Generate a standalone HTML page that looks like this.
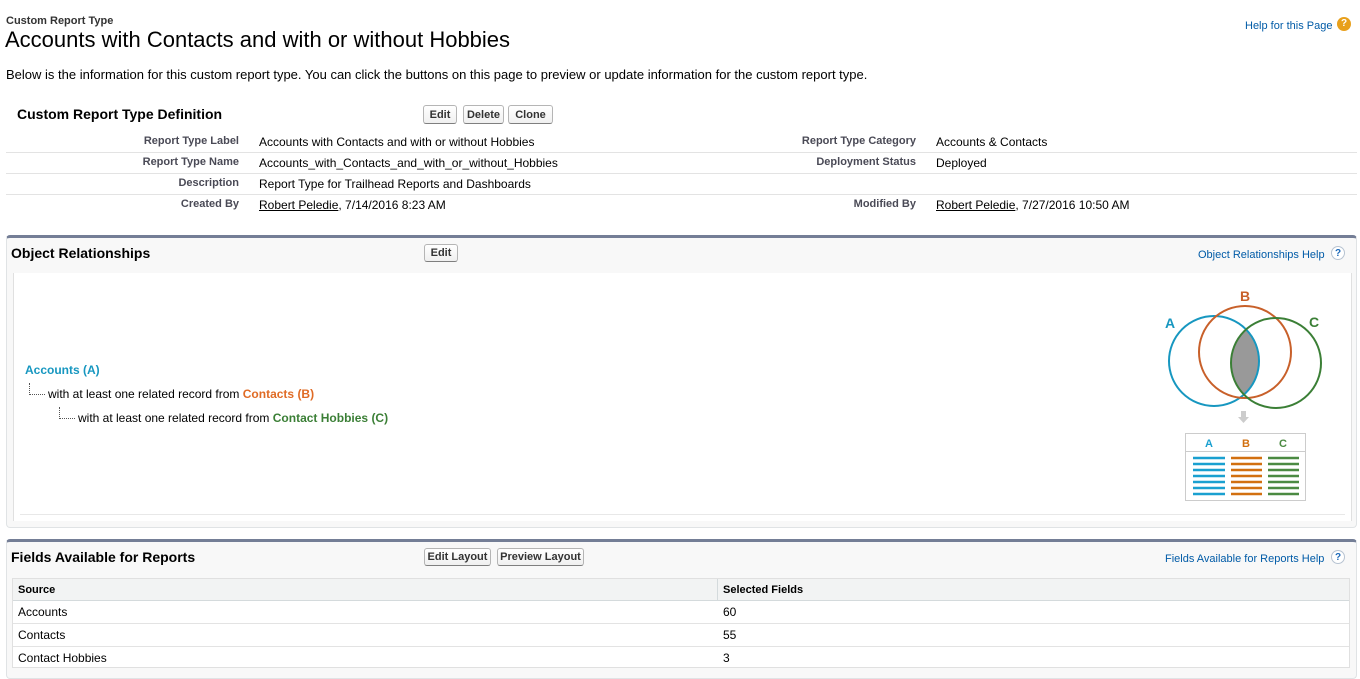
<!DOCTYPE html>
<html><head><style>
body{margin:0;width:1360px;height:664px;overflow:hidden;background:#fff;font-family:"Liberation Sans",Arial,sans-serif;color:#000;position:relative}
.a{position:absolute;white-space:nowrap}
.btn{position:absolute;height:19px;border:1px solid #b5b5b5;border-bottom-color:#7f7f7f;border-radius:3px;background:linear-gradient(#fff,#f0f0f0);font-size:11px;font-weight:bold;color:#333;line-height:19px;text-align:center;box-sizing:border-box}
.lbl{position:absolute;font-size:11px;font-weight:bold;color:#4a4a56;text-align:right;white-space:nowrap}
.val{position:absolute;font-size:12px;white-space:nowrap}
.hl{position:absolute;left:6px;width:1351px;height:1px;background:#e3e3e3}
.link{color:#015ba7;font-size:11px}
.q{position:absolute;width:14px;height:14px;border-radius:50%;background:#fff;border:1px solid #b7c3d1;font-size:10px;font-weight:bold;color:#1b68b8;text-align:center;line-height:14px;box-sizing:border-box}
u{text-decoration:underline}
</style></head><body>
<div class="a" style="left:6px;top:15px;font-size:11px;font-weight:bold;color:#333">Custom Report Type</div>
<div class="a" style="left:5px;top:27px;font-size:22px">Accounts with Contacts and with or without Hobbies</div>
<div class="a link" style="left:1245px;top:20px">Help for this Page</div>
<div class="a" style="left:1337px;top:17px;width:14px;height:14px;border-radius:50%;background:#e8a01c;color:#fff;font-size:10px;font-weight:bold;text-align:center;line-height:14px">?</div>
<div class="a" style="left:6px;top:67px;font-size:13px">Below is the information for this custom report type. You can click the buttons on this page to preview or update information for the custom report type.</div>

<div class="a" style="left:17px;top:106px;font-size:14px;font-weight:bold">Custom Report Type Definition</div>
<div class="btn" style="left:423px;top:105px;width:34px">Edit</div>
<div class="btn" style="left:463px;top:105px;width:41px">Delete</div>
<div class="btn" style="left:508px;top:105px;width:45px">Clone</div>

<div class="lbl" style="right:1121px;top:135px">Report Type Label</div>
<div class="val" style="left:259px;top:135px">Accounts with Contacts and with or without Hobbies</div>
<div class="lbl" style="right:444px;top:135px">Report Type Category</div>
<div class="val" style="left:936px;top:135px">Accounts &amp; Contacts</div>
<div class="hl" style="top:152px"></div>
<div class="lbl" style="right:1121px;top:156px">Report Type Name</div>
<div class="val" style="left:259px;top:156px">Accounts_with_Contacts_and_with_or_without_Hobbies</div>
<div class="lbl" style="right:444px;top:156px">Deployment Status</div>
<div class="val" style="left:936px;top:156px">Deployed</div>
<div class="hl" style="top:173px"></div>
<div class="lbl" style="right:1121px;top:177px">Description</div>
<div class="val" style="left:259px;top:177px">Report Type for Trailhead Reports and Dashboards</div>
<div class="hl" style="top:194px"></div>
<div class="lbl" style="right:1121px;top:198px">Created By</div>
<div class="val" style="left:259px;top:198px"><u>Robert Peledie</u>, 7/14/2016 8:23 AM</div>
<div class="lbl" style="right:444px;top:198px">Modified By</div>
<div class="val" style="left:936px;top:198px"><u>Robert Peledie</u>, 7/27/2016 10:50 AM</div>

<div class="a" style="left:6px;top:235px;width:1351px;height:293px;background:#f8f8f8;border:1px solid #e0e3e5;border-top:3px solid #747e96;border-radius:4px;box-sizing:border-box"></div>
<div class="a" style="left:11px;top:245px;font-size:14px;font-weight:bold">Object Relationships</div>
<div class="btn" style="left:424px;top:244px;width:34px;height:18px;line-height:17px">Edit</div>
<div class="a link" style="left:1198px;top:249px">Object Relationships Help</div>
<div class="q" style="left:1331px;top:246px">?</div>
<div class="a" style="left:13px;top:273px;width:1337px;height:248px;background:#fff;border-left:1px solid #e0e0e0;border-right:1px solid #e0e0e0"></div>
<div class="a" style="left:20px;top:514px;width:1325px;height:1px;background:#e8e8e8"></div>
<div class="a" style="left:25px;top:363px;font-size:12px;font-weight:bold;color:#1797c0">Accounts (A)</div>
<div class="a" style="left:29px;top:383px;width:15px;height:11px;border-left:1px dotted #555;border-bottom:1px dotted #555"></div>
<div class="a" style="left:48px;top:387px;font-size:12px">with at least one related record from <b style="color:#e06b25">Contacts (B)</b></div>
<div class="a" style="left:59px;top:407px;width:15px;height:11px;border-left:1px dotted #555;border-bottom:1px dotted #555"></div>
<div class="a" style="left:78px;top:411px;font-size:12px">with at least one related record from <b style="color:#3b7f36">Contact Hobbies (C)</b></div>

<svg class="a" style="left:1150px;top:280px" width="200" height="230" viewBox="1150 280 200 230">
<defs><clipPath id="ca"><circle cx="1214" cy="361" r="45"/></clipPath></defs>
<circle cx="1276" cy="363" r="45" fill="#999" clip-path="url(#ca)"/>
<circle cx="1214" cy="361" r="45" fill="none" stroke="#1797c0" stroke-width="2"/>
<circle cx="1245" cy="352" r="46" fill="none" stroke="#c8602a" stroke-width="2"/>
<circle cx="1276" cy="363" r="45" fill="none" stroke="#3b7f36" stroke-width="2"/>
<text x="1170" y="328" font-size="14" font-weight="bold" fill="#1797c0" text-anchor="middle" font-family="Liberation Sans">A</text>
<text x="1245" y="301" font-size="14" font-weight="bold" fill="#c8602a" text-anchor="middle" font-family="Liberation Sans">B</text>
<text x="1314" y="327" font-size="14" font-weight="bold" fill="#3b7f36" text-anchor="middle" font-family="Liberation Sans">C</text>
<path d="M1241 411h5v6h3l-5.5 6-5.5-6h3z" fill="#ccc"/>
<rect x="1185.5" y="433.5" width="120" height="67" fill="#fff" stroke="#ccc"/>
<line x1="1185" y1="451.5" x2="1306" y2="451.5" stroke="#ccc"/>
<text x="1209" y="447" font-size="11" font-weight="bold" fill="#1aa0d0" text-anchor="middle" font-family="Liberation Sans">A</text>
<text x="1246" y="447" font-size="11" font-weight="bold" fill="#d27010" text-anchor="middle" font-family="Liberation Sans">B</text>
<text x="1283" y="447" font-size="11" font-weight="bold" fill="#4b8a42" text-anchor="middle" font-family="Liberation Sans">C</text>
<g stroke-width="2.5">
<path d="M1193 458h32M1193 464h32M1193 470h32M1193 476h32M1193 482h32M1193 488h32M1193 494h32" stroke="#1aa0d0"/>
<path d="M1231 458h31M1231 464h31M1231 470h31M1231 476h31M1231 482h31M1231 488h31M1231 494h31" stroke="#d27010"/>
<path d="M1268 458h31M1268 464h31M1268 470h31M1268 476h31M1268 482h31M1268 488h31M1268 494h31" stroke="#4b8a42"/>
</g>
</svg>

<div class="a" style="left:6px;top:539px;width:1351px;height:140px;background:#f8f8f8;border:1px solid #e0e3e5;border-top:3px solid #747e96;border-radius:4px;box-sizing:border-box"></div>
<div class="a" style="left:11px;top:549px;font-size:14px;font-weight:bold">Fields Available for Reports</div>
<div class="btn" style="left:424px;top:548px;width:67px;height:18px;line-height:17px">Edit Layout</div>
<div class="btn" style="left:497px;top:548px;width:87px;height:18px;line-height:17px">Preview Layout</div>
<div class="a link" style="left:1165px;top:553px">Fields Available for Reports Help</div>
<div class="q" style="left:1331px;top:550px">?</div>
<div class="a" style="left:12px;top:578px;width:1338px;height:90px;background:#fff;border:1px solid #e0e0e0;box-sizing:border-box"></div>
<div class="a" style="left:13px;top:579px;width:1336px;height:21px;background:#f2f3f3;border-bottom:1px solid #d4dadc"></div>
<div class="a" style="left:717px;top:579px;width:1px;height:22px;background:#d4dadc"></div>
<div class="a" style="left:18px;top:584px;font-size:11px;font-weight:bold">Source</div>
<div class="a" style="left:723px;top:584px;font-size:11px;font-weight:bold">Selected Fields</div>
<div class="val" style="left:18px;top:605px">Accounts</div><div class="val" style="left:723px;top:605px">60</div>
<div class="a" style="left:13px;top:623px;width:1336px;height:1px;background:#e3e3e3"></div>
<div class="val" style="left:18px;top:628px">Contacts</div><div class="val" style="left:723px;top:628px">55</div>
<div class="a" style="left:13px;top:646px;width:1336px;height:1px;background:#e3e3e3"></div>
<div class="val" style="left:18px;top:651px">Contact Hobbies</div><div class="val" style="left:723px;top:651px">3</div>
</body></html>
